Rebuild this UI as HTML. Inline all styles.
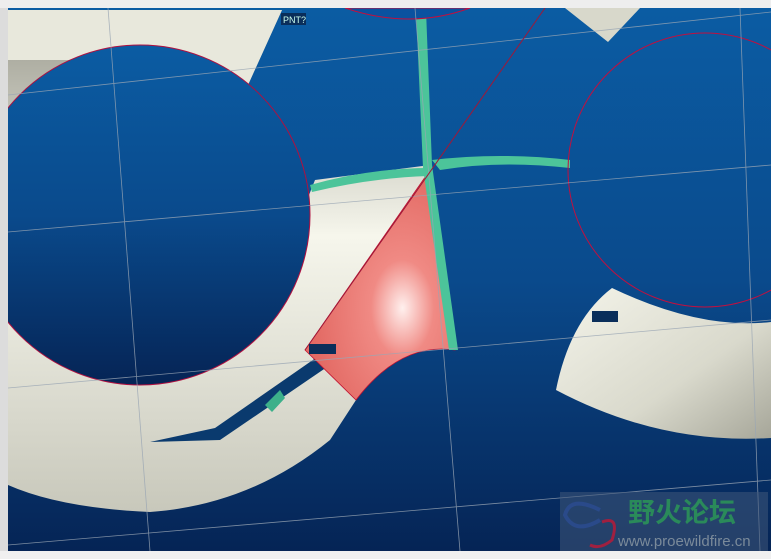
<!DOCTYPE html>
<html><head><meta charset="utf-8"><style>
html,body{margin:0;padding:0;width:771px;height:559px;overflow:hidden;background:#f0f0f0}
svg{position:absolute;left:0;top:0}
</style></head><body>
<svg width="771" height="559" viewBox="0 0 771 559" xmlns="http://www.w3.org/2000/svg">
<defs>
<linearGradient id="bg" x1="0" y1="0" x2="0" y2="1">
<stop offset="0" stop-color="#0b5ca3"/><stop offset="0.5" stop-color="#0a4a8c"/><stop offset="1" stop-color="#052455"/>
</linearGradient>
<linearGradient id="wt" x1="0" y1="0" x2="1" y2="1">
<stop offset="0" stop-color="#f4f4ea"/><stop offset="0.6" stop-color="#d9d9cc"/><stop offset="1" stop-color="#a6a699"/>
</linearGradient>
<linearGradient id="wb" x1="0" y1="0" x2="0" y2="1">
<stop offset="0" stop-color="#9a9a8e"/><stop offset="0.45" stop-color="#f6f6ec"/><stop offset="1" stop-color="#c8c8bb"/>
</linearGradient>
<radialGradient id="pk" cx="0.65" cy="0.6" r="0.6">
<stop offset="0" stop-color="#fff0ee"/><stop offset="0.35" stop-color="#f08a84"/><stop offset="1" stop-color="#e36a64"/>
</radialGradient>
</defs>
<rect x="0" y="0" width="771" height="559" fill="#eeeeee"/>
<rect x="8" y="8" width="763" height="543" fill="url(#bg)"/>
<!-- left torus -->
<path d="M8,10 L282,10 L248,85 L307,200 L315,180 L430,165 L455,350 Q400,342 356,400 L330,440 Q250,505 150,512 Q60,508 8,485 Z" fill="url(#wb)"/>
<path d="M8,10 L282,10 L248,85 L200,60 L8,60 Z" fill="#e8e8dc"/>
<circle cx="140" cy="215" r="170" fill="url(#bg)"/>
<circle cx="140" cy="215" r="170" fill="none" stroke="#b01040" stroke-width="1"/>
<!-- dark cut in lower band -->
<path d="M150,442 L215,428 L320,355 L330,365 L220,440 Z" fill="#0a3a6e"/>
<path d="M265,405 L280,390 L285,398 L272,412 Z" fill="#3cb08a"/>
<!-- pink patch -->
<path d="M305,350 L430,170 L440,230 L455,350 Q400,342 356,400 Z" fill="url(#pk)" stroke="#c01030" stroke-width="0.8"/>
<!-- green strips -->
<path d="M416,10 L426,10 L432,165 L458,350 L449,350 L423,168 Z" fill="#4cc49a"/>
<path d="M432,160 Q500,152 570,160 L570,168 Q500,160 440,170 Z" fill="#4cc49a"/>
<path d="M310,185 Q370,168 430,168 L428,176 Q370,178 312,192 Z" fill="#4cc49a"/>
<!-- top center hole -->
<path d="M345,8 Q410,30 470,8 Z" fill="#0a52a0" stroke="#c01040" stroke-width="1"/>
<!-- right torus -->
<path d="M565,8 L640,8 L608,42 Z" fill="#d8d8cb"/>
<path d="M556,390 Q570,320 612,288 Q700,330 771,322 L771,438 Q660,445 556,390 Z" fill="url(#wt)"/>
<circle cx="705" cy="170" r="137" fill="none" stroke="#c01040" stroke-width="1"/>
<!-- grid lines -->
<g stroke="#9aa6b4" stroke-width="0.8" opacity="0.8" fill="none">
<line x1="8" y1="95" x2="771" y2="12"/>
<line x1="8" y1="232" x2="771" y2="165"/>
<line x1="8" y1="388" x2="771" y2="320"/>
<line x1="8" y1="545" x2="771" y2="480"/>
<line x1="108" y1="8" x2="150" y2="551"/>
<line x1="415" y1="8" x2="460" y2="551"/>
<line x1="740" y1="8" x2="760" y2="551"/>
</g>
<line x1="305" y1="350" x2="545" y2="8" stroke="#a01838" stroke-width="1"/>
<!-- labels -->
<rect x="281" y="13" width="25" height="12" fill="#0a2e5a"/>
<text x="283" y="23" font-family="Liberation Sans,sans-serif" font-size="9" fill="#cfe">PNT?</text>
<rect x="309" y="344" width="27" height="10" fill="#0a2e5a"/>
<rect x="592" y="311" width="26" height="11" fill="#0a2e5a"/>
<!-- toolbar -->
<rect x="0" y="0" width="771" height="8" fill="#eeeeee"/>
<rect x="0" y="8" width="8" height="543" fill="#dcdcdc"/>
<rect x="0" y="551" width="771" height="8" fill="#f0f0f0"/>
<!-- watermark -->
<rect x="560" y="492" width="208" height="59" fill="#3f587a" opacity="0.55"/>
<path d="M600,510 Q570,495 565,515 Q575,535 600,520" fill="none" stroke="#2a4a8a" stroke-width="4"/>
<path d="M602,522 Q620,515 612,540 Q600,550 590,545" fill="none" stroke="#a02040" stroke-width="3"/>
<text x="628" y="522" font-family="Liberation Sans,'Noto Sans CJK SC',sans-serif" font-size="27" font-weight="bold" fill="#2a8a5a">野火论坛</text>
<text x="618" y="546" font-family="Liberation Sans,sans-serif" font-size="15" fill="#7a8a9a">www.proewildfire.cn</text>
</svg>
</body></html>
